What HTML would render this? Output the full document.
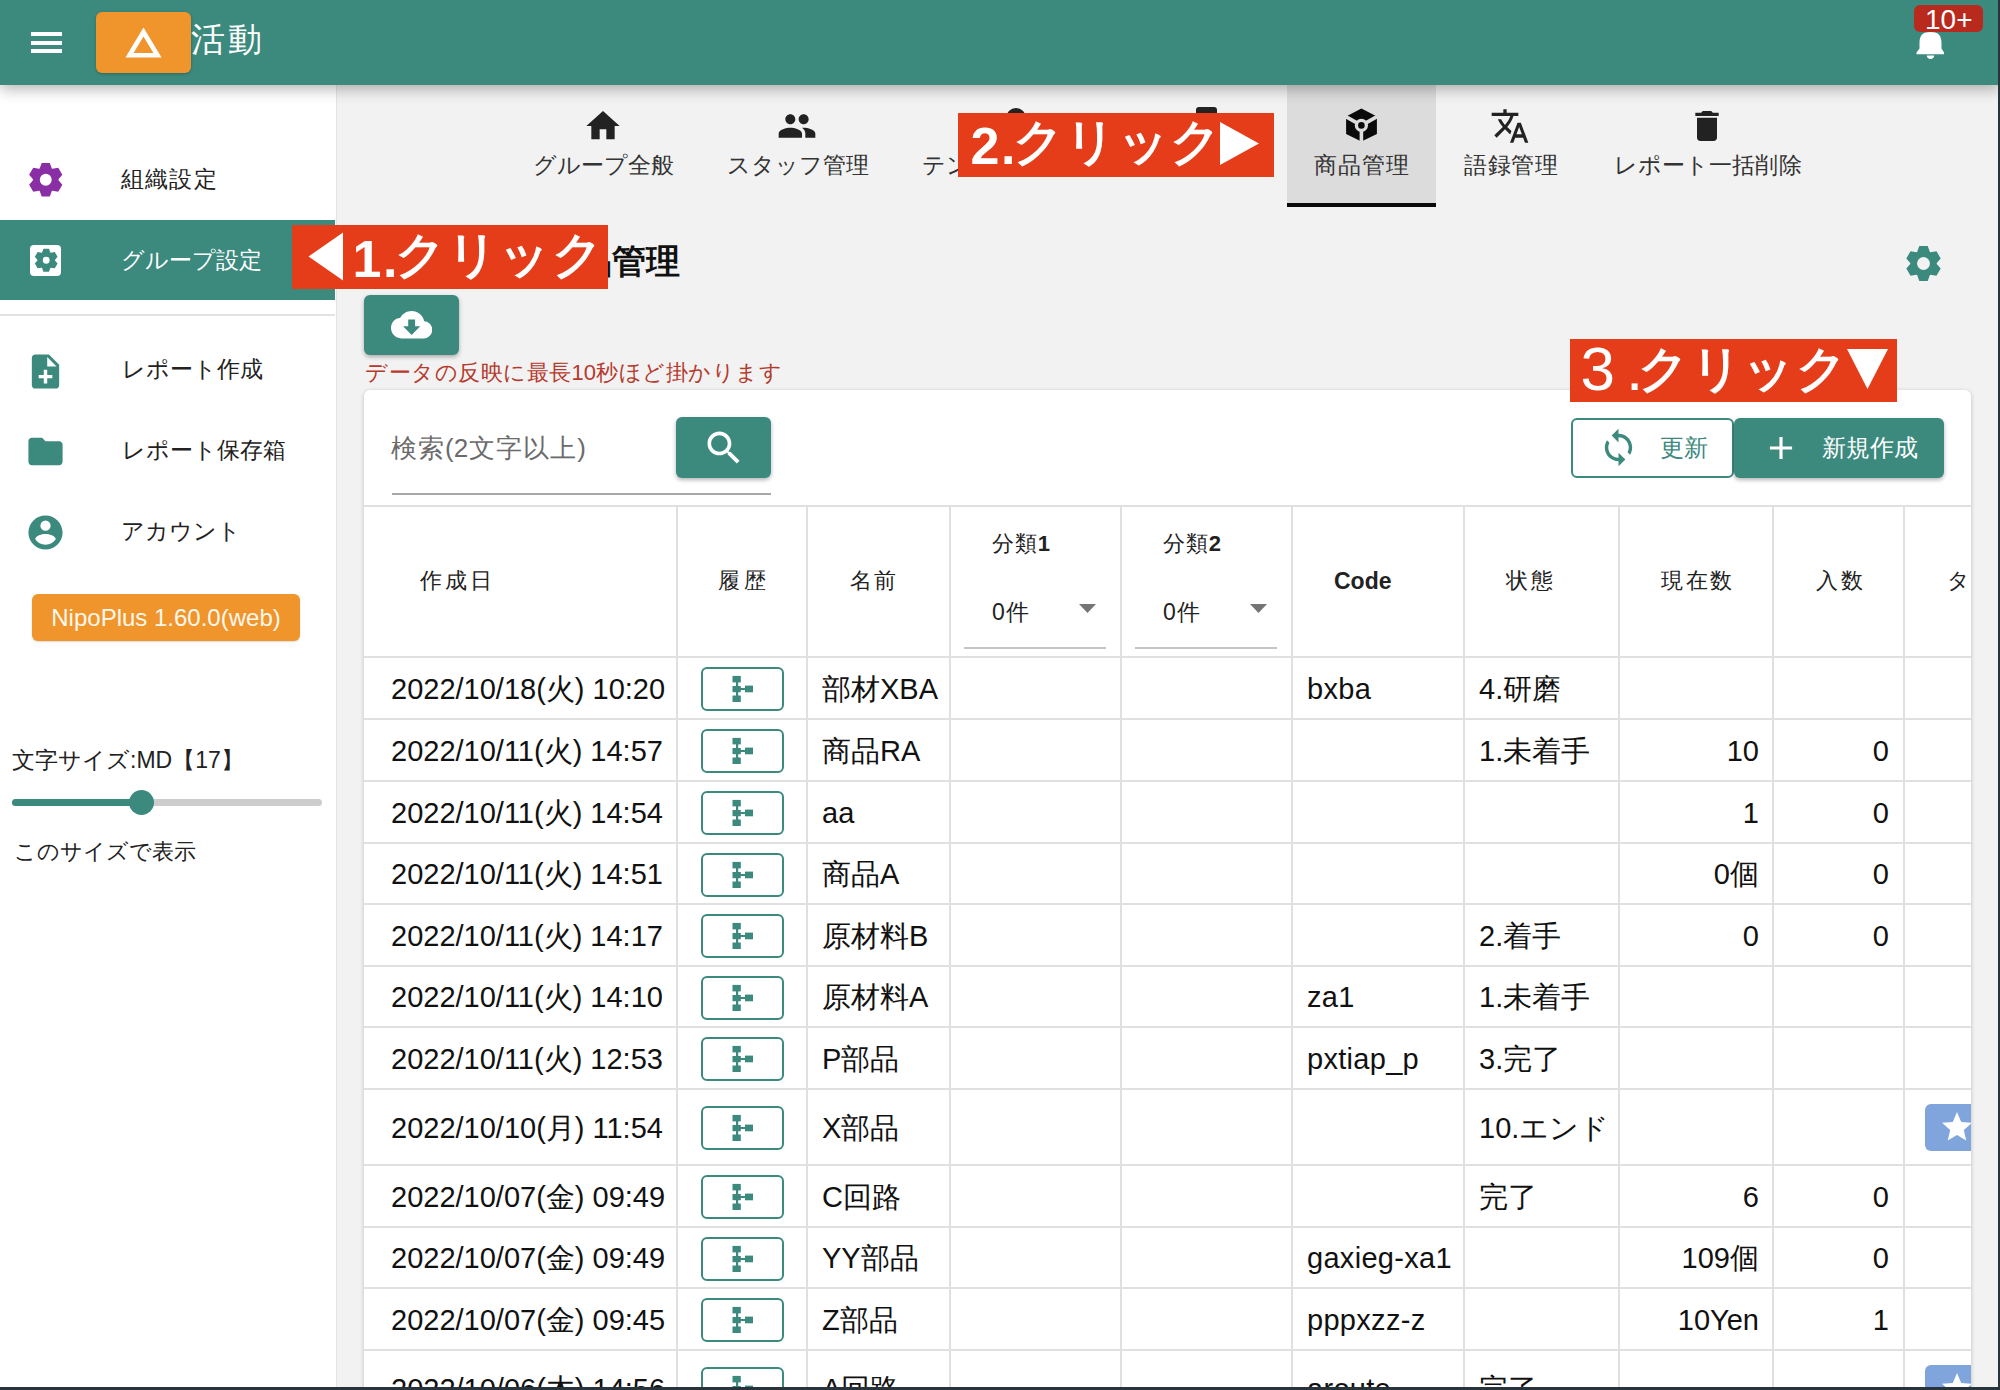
<!DOCTYPE html>
<html lang="ja"><head><meta charset="utf-8">
<style>
*{box-sizing:border-box;margin:0;padding:0}
html,body{width:2000px;height:1390px;overflow:hidden;background:#f2f2f2;font-family:"Liberation Sans",sans-serif;color:#222}
.a{position:absolute}
.t{position:absolute;white-space:nowrap;line-height:1}
svg{position:absolute;display:block}
#hdr{left:0;top:0;width:2000px;height:85px;background:#3c897e;z-index:5;box-shadow:0 4px 14px rgba(0,0,0,.30)}
#side{left:0;top:85px;width:337px;height:1305px;background:#fff;border-right:1px solid #e4e4e4;z-index:2}
.teal{background:#3c897e}
.ann{position:absolute;background:#e53d1a;z-index:20}
.hbtn{position:absolute;width:83px;height:44px;border:2px solid #3c897e;border-radius:6px;background:#fff}
</style></head><body>

<div id="hdr" class="a">
<div class="a" style="left:31px;top:32px;width:31px;height:4px;background:#fff"></div>
<div class="a" style="left:31px;top:40.5px;width:31px;height:4px;background:#fff"></div>
<div class="a" style="left:31px;top:49px;width:31px;height:4px;background:#fff"></div>
<div class="a" style="left:96px;top:12px;width:95px;height:61px;background:#f0952b;border-radius:6px;box-shadow:0 1px 3px rgba(0,0,0,.25)"></div>
<svg style="left:122px;top:24px" width="44" height="38" viewBox="0 0 44 38"><path d="M21.5 8 L35.5 31.2 L7.5 31.2 Z" fill="none" stroke="#fff" stroke-width="4.6" stroke-linejoin="miter"/></svg>
<div class="t" style="font-size:34px;color:#fff;font-weight:normal;top:21.5px;left:191.00px;width:71.00px;text-align:justify;text-align-last:justify;">活動</div>
<div class="a" style="left:1914px;top:5px;width:69px;height:27px;background:#b8291e;border-radius:6px"></div>
<div class="t" style="font-size:28px;color:#fff;font-weight:normal;top:6px;left:1925.00px;">10+</div>
<svg style="left:1914px;top:30px" width="32" height="32" viewBox="0 0 32 32"><path d="M5.5 13 C5.5 5 9 2 16.5 2 C24 2 27.5 5 27.5 13 L27.5 18.5 L30 22.5 L30 24.2 L2.5 24.2 L2.5 22.5 L5.5 18.5 Z M12.8 25.5 L20.2 25.5 C20.2 27.5 18.5 29 16.5 29 C14.5 29 12.8 27.5 12.8 25.5 Z" fill="#fff"/></svg>
</div>
<div class="a" style="left:1998px;top:0;width:2px;height:1390px;background:#28343a;z-index:30"></div>
<div class="a" style="left:0;top:1387px;width:2000px;height:3px;background:#28343a;z-index:30"></div>
<div id="side" class="a">
<svg style="left:25px;top:73.5px" width="41.5" height="41.5" viewBox="0 0 24 24"><path fill-rule="evenodd" d="M8.50,5.48 L9.65,2.28 L14.35,2.28 L15.50,5.48 L15.90,5.71 L19.24,5.10 L21.59,9.18 L19.40,11.77 L19.40,12.23 L21.59,14.82 L19.24,18.90 L15.90,18.29 L15.50,18.52 L14.35,21.72 L9.65,21.72 L8.50,18.52 L8.10,18.29 L4.76,18.90 L2.41,14.82 L4.60,12.23 L4.60,11.77 L2.41,9.18 L4.76,5.10 L8.10,5.71 Z M8.55,12 a3.45,3.45 0 1,0 6.90,0 a3.45,3.45 0 1,0 -6.90,0 Z" fill="#8a2ea6"/></svg>
<div class="t" style="font-size:23px;color:#222;font-weight:normal;top:83px;left:120.50px;width:96.00px;text-align:justify;text-align-last:justify;">組織設定</div>
<div class="a teal" style="left:0;top:135px;width:335px;height:80px"></div>
<div class="a" style="left:30px;top:160px;width:31px;height:31px;background:#fff;border-radius:4px"></div>
<svg style="left:31.6px;top:161.3px" width="28.4" height="28.4" viewBox="0 0 24 24"><path fill-rule="evenodd" d="M8.50,5.48 L9.65,2.28 L14.35,2.28 L15.50,5.48 L15.90,5.71 L19.24,5.10 L21.59,9.18 L19.40,11.77 L19.40,12.23 L21.59,14.82 L19.24,18.90 L15.90,18.29 L15.50,18.52 L14.35,21.72 L9.65,21.72 L8.50,18.52 L8.10,18.29 L4.76,18.90 L2.41,14.82 L4.60,12.23 L4.60,11.77 L2.41,9.18 L4.76,5.10 L8.10,5.71 Z M9.10,12 a2.90,2.90 0 1,0 5.80,0 a2.90,2.90 0 1,0 -5.80,0 Z" fill="#3c897e"/></svg>
<div class="t" style="font-size:23px;color:#fff;font-weight:normal;top:164px;left:121.00px;width:137.00px;text-align:justify;text-align-last:justify;">グループ設定</div>
<div class="a" style="left:0;top:229px;width:335px;height:2px;background:#e2e2e2"></div>
<svg style="left:25px;top:266px" width="41" height="41" viewBox="0 0 24 24"><path d="M14 2H6c-1.1 0-1.99.9-1.99 2L4 20c0 1.1.89 2 1.99 2H18c1.1 0 2-.9 2-2V8l-6-6zm2 14h-3v3h-2v-3H8v-2h3v-3h2v3h3v2zm-3-7V3.5L18.5 9H13z" fill="#3c897e"/></svg>
<div class="t" style="font-size:23px;color:#222;font-weight:normal;top:273px;left:122.00px;width:140.00px;text-align:justify;text-align-last:justify;">レポート作成</div>
<svg style="left:25px;top:346px" width="41" height="41" viewBox="0 0 24 24"><path d="M10 4H4c-1.1 0-1.99.9-1.99 2L2 18c0 1.1.9 2 2 2h16c1.1 0 2-.9 2-2V8c0-1.1-.9-2-2-2h-8l-2-2z" fill="#3c897e"/></svg>
<div class="t" style="font-size:23px;color:#222;font-weight:normal;top:354px;left:122.00px;width:163.00px;text-align:justify;text-align-last:justify;">レポート保存箱</div>
<svg style="left:25px;top:427px" width="41" height="41" viewBox="0 0 24 24"><path d="M12,19.2C9.5,19.2 7.290,17.92 6,16C6.03,14 10,12.9 12,12.9C14,12.9 17.97,14 18,16C16.71,17.92 14.5,19.2 12,19.2M12,5A3,3 0 0,1 15,8A3,3 0 0,1 12,11A3,3 0 0,1 9,8A3,3 0 0,1 12,5M12,2A10,10 0 0,0 2,12A10,10 0 0,0 12,22A10,10 0 0,0 22,12C22,6.47 17.5,2 12,2Z" fill="#3c897e"/></svg>
<div class="t" style="font-size:23px;color:#222;font-weight:normal;top:435px;left:121.00px;width:115.00px;text-align:justify;text-align-last:justify;">アカウント</div>
<div class="a" style="left:32px;top:509px;width:268px;height:47px;background:#f0952b;border-radius:6px;box-shadow:0 1px 2px rgba(0,0,0,.15)"></div>
<div class="t" style="left:32px;top:521px;width:268px;text-align:center;font-size:24px;color:#fff8ee">NipoPlus 1.60.0(web)</div>
<div class="t" style="font-size:23px;color:#222;font-weight:normal;top:664px;left:12.00px;width:221.00px;text-align:justify;text-align-last:justify;">文字サイズ:MD【17】</div>
<div class="a" style="left:12px;top:714px;width:310px;height:7px;background:#cdcdcd;border-radius:4px"></div>
<div class="a" style="left:12px;top:714px;width:130px;height:7px;background:#3c897e;border-radius:4px"></div>
<div class="a" style="left:128.5px;top:704.5px;width:25px;height:25px;background:#3c897e;border-radius:50%"></div>
<div class="t" style="font-size:22.4px;color:#222;font-weight:normal;top:755.5px;left:14.00px;width:181.00px;text-align:justify;text-align-last:justify;">このサイズで表示</div>
</div>
<div class="a" style="left:1287px;top:85px;width:149px;height:118px;background:#dcdcdc"></div>
<div class="a" style="left:1287px;top:203px;width:149px;height:4px;background:#0a0a0a"></div>
<svg style="left:583px;top:105.5px" width="40" height="40" viewBox="0 0 24 24"><path d="M10 20v-6h4v6h5v-8h3L12 3 2 12h3v8z" fill="#222"/></svg>
<svg style="left:777px;top:105.5px" width="40" height="40" viewBox="0 0 24 24"><path d="M16 11c1.66 0 2.99-1.34 2.99-3S17.66 5 16 5c-1.66 0-3 1.34-3 3s1.34 3 3 3zm-8 0c1.66 0 2.99-1.34 2.99-3S9.66 5 8 5C6.34 5 5 6.34 5 8s1.34 3 3 3zm0 2c-2.33 0-7 1.17-7 3.5V19h14v-2.5c0-2.330-4.67-3.5-7-3.5zm8 0c-.29 0-.62.02-.97.05 1.16.84 1.97 1.97 1.97 3.45V19h6v-2.5c0-2.33-4.67-3.5-7-3.5z" fill="#222"/></svg>
<svg style="left:1490px;top:105.5px" width="40" height="40" viewBox="0 0 24 24"><path d="M12.87 15.07l-2.54-2.51.03-.03c1.74-1.94 2.98-4.17 3.71-6.53H17V4h-7V2H8v2H1v1.99h11.17C11.5 7.92 10.44 9.75 9 11.35 8.07 10.32 7.3 9.19 6.69 8h-2c.73 1.63 1.730 3.17 2.98 4.56l-5.09 5.02L4 19l5-5 3.11 3.11.76-2.04zM18.5 10h-2L12 22h2l1.12-3h4.75L21 22h2l-4.5-12zm-2.62 7l1.62-4.33L19.12 17h-3.24z" fill="#222"/></svg>
<svg style="left:1687px;top:105.5px" width="40" height="40" viewBox="0 0 24 24"><path d="M6 19c0 1.1.9 2 2 2h8c1.1 0 2-.9 2-2V7H6v12zM19 4h-3.5l-1-1h-5l-1 1H5v2h14V4z" fill="#222"/></svg>
<div class="a" style="left:1005.7px;top:107.7px;width:20.6px;height:20.6px;border-radius:50%;background:#222"></div>
<div class="a" style="left:1196px;top:107px;width:21px;height:20px;border-radius:3px 3px 0 0;background:#222"></div>
<div class="t" style="font-size:23px;color:#333;font-weight:normal;top:153.5px;left:533.00px;width:137.00px;text-align:justify;text-align-last:justify;">グループ全般</div>
<div class="t" style="font-size:23px;color:#333;font-weight:normal;top:153.5px;left:727.00px;width:140.00px;text-align:justify;text-align-last:justify;">スタッフ管理</div>
<div class="t" style="font-size:23px;color:#333;font-weight:normal;top:153.5px;left:922.00px;width:186.00px;text-align:justify;text-align-last:justify;">テンプレート管理</div>
<div class="t" style="font-size:23px;color:#333;font-weight:normal;top:153.5px;left:1314.00px;width:95.00px;text-align:justify;text-align-last:justify;">商品管理</div>
<div class="t" style="font-size:23px;color:#333;font-weight:normal;top:153.5px;left:1464.00px;width:94.00px;text-align:justify;text-align-last:justify;">語録管理</div>
<div class="t" style="font-size:23px;color:#333;font-weight:normal;top:153.5px;left:1613.50px;width:188.00px;text-align:justify;text-align-last:justify;">レポート一括削除</div>
<svg style="left:1336px;top:100px" width="50" height="50" viewBox="0 0 50 50"><path d="M25.4 8.4 L40.9 16.4 L40.9 33.9 L25.4 41.6 L10.1 33.9 L10.1 16.4 Z" fill="#0a0a0a"/><path d="M25.4 25.4 L8 15.6 M25.4 25.4 L42.8 15.6 M25.4 25.4 L25.4 44" stroke="#dcdcdc" stroke-width="3.6" fill="none"/><circle cx="25.4" cy="25.4" r="6.6" fill="#dcdcdc"/><circle cx="25.4" cy="25.4" r="3.3" fill="#0a0a0a"/></svg>
<div class="t" style="font-size:34px;color:#111;font-weight:bold;top:244px;left:544.00px;width:136.00px;text-align:justify;text-align-last:justify;">商品管理</div>
<svg style="left:1902px;top:242px" width="43" height="43" viewBox="0 0 24 24"><path fill-rule="evenodd" d="M8.50,5.48 L9.65,2.28 L14.35,2.28 L15.50,5.48 L15.90,5.71 L19.24,5.10 L21.59,9.18 L19.40,11.77 L19.40,12.23 L21.59,14.82 L19.24,18.90 L15.90,18.29 L15.50,18.52 L14.35,21.72 L9.65,21.72 L8.50,18.52 L8.10,18.29 L4.76,18.90 L2.41,14.82 L4.60,12.23 L4.60,11.77 L2.41,9.18 L4.76,5.10 L8.10,5.71 Z M8.40,12 a3.60,3.60 0 1,0 7.20,0 a3.60,3.60 0 1,0 -7.20,0 Z" fill="#3c897e"/></svg>
<div class="a" style="left:364px;top:295px;width:95px;height:60px;background:#3c897e;border-radius:6px;box-shadow:0 2px 4px rgba(0,0,0,.3)"></div>
<svg style="left:391px;top:304.1px" width="41.3" height="41.3" viewBox="0 0 24 24"><path d="M19.35 10.04C18.67 6.59 15.64 4 12 4 9.11 4 6.6 5.64 5.35 8.04 2.34 8.36 0 10.91 0 14c0 3.31 2.69 6 6 6h13c2.76 0 5-2.24 5-5 0-2.64-2.05-4.78-4.65-4.96zM17 13l-5 5-5-5h3V9h4v4h3z" fill="#fff"/></svg>
<div class="t" style="font-size:22px;color:#b53a2e;font-weight:normal;top:362px;left:365.00px;width:417.00px;text-align:justify;text-align-last:justify;">データの反映に最長10秒ほど掛かります</div>
<div id="card" class="a" style="left:364px;top:390px;width:1607px;height:1100px;background:#fff;border-radius:6px;box-shadow:0 1px 4px rgba(0,0,0,.22);overflow:hidden">
<div class="t" style="font-size:26px;color:#6b6b6b;font-weight:normal;top:45px;left:27.00px;width:195.00px;text-align:justify;text-align-last:justify;">検索(2文字以上)</div>
<div class="a" style="left:28px;top:103px;width:379px;height:2px;background:#a8a8a8"></div>
<div class="a" style="left:312px;top:27px;width:95px;height:61px;background:#3c897e;border-radius:6px;box-shadow:0 2px 4px rgba(0,0,0,.3)"></div>
<svg style="left:337.5px;top:36px" width="44" height="44" viewBox="0 0 24 24"><path d="M15.5 14h-.79l-.28-.27C15.41 12.59 16 11.11 16 9.5 16 5.91 13.09 3 9.5 3S3 5.91 3 9.5 5.91 16 9.5 16c1.61 0 3.09-.59 4.23-1.57l.27.28v.79l5 4.99L20.49 19l-4.99-5zm-6 0C7.01 14 5 11.99 5 9.5S7.01 5 9.5 5 14 7.01 14 9.5 11.99 14 9.5 14z" fill="#fff"/></svg>
<div class="a" style="left:1207px;top:28px;width:163px;height:60px;border:2px solid #3c897e;border-radius:6px;background:#fff"></div>
<svg style="left:1234px;top:37px" width="41" height="41" viewBox="0 0 24 24"><path d="M12 4V1L8 5l4 4V6c3.31 0 6 2.69 6 6 0 1.01-.25 1.97-.7 2.8l1.46 1.46C19.54 15.03 20 13.57 20 12c0-4.42-3.58-8-8-8zm0 14c-3.31 0-6-2.690-6-6 0-1.01.25-1.97.7-2.8L5.24 7.74C4.46 8.97 4 10.43 4 12c0 4.42 3.58 8 8 8v3l4-4-4-4v3z" fill="#3c897e"/></svg>
<div class="t" style="font-size:24px;color:#3c897e;font-weight:normal;top:46px;left:1296.00px;width:47.00px;text-align:justify;text-align-last:justify;">更新</div>
<div class="a" style="left:1370px;top:28px;width:210px;height:60px;background:#3c897e;border-radius:6px;box-shadow:0 2px 4px rgba(0,0,0,.3)"></div>
<svg style="left:1398px;top:39px" width="38" height="38" viewBox="0 0 24 24"><path d="M19 13h-6v6h-2v-6H5v-2h6V5h2v6h6v2z" fill="#fff"/></svg>
<div class="t" style="font-size:24px;color:#fff;font-weight:normal;top:46px;left:1458.00px;width:95.00px;text-align:justify;text-align-last:justify;">新規作成</div>
<div class="a" style="left:312px;top:115px;width:2px;height:1000px;background:#e0e0e0"></div>
<div class="a" style="left:442px;top:115px;width:2px;height:1000px;background:#e0e0e0"></div>
<div class="a" style="left:585px;top:115px;width:2px;height:1000px;background:#e0e0e0"></div>
<div class="a" style="left:756px;top:115px;width:2px;height:1000px;background:#e0e0e0"></div>
<div class="a" style="left:927px;top:115px;width:2px;height:1000px;background:#e0e0e0"></div>
<div class="a" style="left:1099px;top:115px;width:2px;height:1000px;background:#e0e0e0"></div>
<div class="a" style="left:1254px;top:115px;width:2px;height:1000px;background:#e0e0e0"></div>
<div class="a" style="left:1408px;top:115px;width:2px;height:1000px;background:#e0e0e0"></div>
<div class="a" style="left:1539px;top:115px;width:2px;height:1000px;background:#e0e0e0"></div>
<div class="a" style="left:0;top:115px;width:1607px;height:2px;background:#e0e0e0"></div>
<div class="a" style="left:0;top:266px;width:1607px;height:2px;background:#e0e0e0"></div>
<div class="a" style="left:0;top:328px;width:1607px;height:2px;background:#e0e0e0"></div>
<div class="a" style="left:0;top:390px;width:1607px;height:2px;background:#e0e0e0"></div>
<div class="a" style="left:0;top:452px;width:1607px;height:2px;background:#e0e0e0"></div>
<div class="a" style="left:0;top:513px;width:1607px;height:2px;background:#e0e0e0"></div>
<div class="a" style="left:0;top:575px;width:1607px;height:2px;background:#e0e0e0"></div>
<div class="a" style="left:0;top:636px;width:1607px;height:2px;background:#e0e0e0"></div>
<div class="a" style="left:0;top:698px;width:1607px;height:2px;background:#e0e0e0"></div>
<div class="a" style="left:0;top:774px;width:1607px;height:2px;background:#e0e0e0"></div>
<div class="a" style="left:0;top:836px;width:1607px;height:2px;background:#e0e0e0"></div>
<div class="a" style="left:0;top:897px;width:1607px;height:2px;background:#e0e0e0"></div>
<div class="a" style="left:0;top:959px;width:1607px;height:2px;background:#e0e0e0"></div>
<div class="a" style="left:0;top:1035px;width:1607px;height:2px;background:#e0e0e0"></div>
<div class="t" style="font-size:22px;color:#222;font-weight:normal;top:180px;left:55.50px;width:72.00px;text-align:justify;text-align-last:justify;">作成日</div>
<div class="t" style="font-size:22px;color:#222;font-weight:normal;top:180px;left:354.00px;width:48.00px;text-align:justify;text-align-last:justify;">履歴</div>
<div class="t" style="font-size:22px;color:#222;font-weight:normal;top:180px;left:486.00px;width:46.00px;text-align:justify;text-align-last:justify;">名前</div>
<div class="t" style="font-size:22px;color:#222;font-weight:normal;top:143px;left:628.00px;width:58.00px;text-align:justify;text-align-last:justify;">分類<b>1</b></div>
<div class="t" style="font-size:23px;color:#222;font-weight:normal;top:211px;left:628.00px;width:37.00px;text-align:justify;text-align-last:justify;">0件</div>
<svg style="left:715px;top:214px" width="17" height="10" viewBox="0 0 17 10"><path d="M0 0 L17 0 L8.5 9 Z" fill="#757575"/></svg>
<div class="a" style="left:600px;top:257px;width:142px;height:2px;background:#c4c4c4"></div>
<div class="t" style="font-size:22px;color:#222;font-weight:normal;top:143px;left:799.00px;width:58.00px;text-align:justify;text-align-last:justify;">分類<b>2</b></div>
<div class="t" style="font-size:23px;color:#222;font-weight:normal;top:211px;left:799.00px;width:37.00px;text-align:justify;text-align-last:justify;">0件</div>
<svg style="left:886px;top:214px" width="17" height="10" viewBox="0 0 17 10"><path d="M0 0 L17 0 L8.5 9 Z" fill="#757575"/></svg>
<div class="a" style="left:771px;top:257px;width:142px;height:2px;background:#c4c4c4"></div>
<div class="t" style="font-size:23px;color:#222;font-weight:bold;top:180px;left:970.00px;">Code</div>
<div class="t" style="font-size:22px;color:#222;font-weight:normal;top:180px;left:1142.00px;width:47.00px;text-align:justify;text-align-last:justify;">状態</div>
<div class="t" style="font-size:22px;color:#222;font-weight:normal;top:180px;left:1297.00px;width:71.00px;text-align:justify;text-align-last:justify;">現在数</div>
<div class="t" style="font-size:22px;color:#222;font-weight:normal;top:180px;left:1452.00px;width:47.00px;text-align:justify;text-align-last:justify;">入数</div>
<div class="t" style="font-size:22px;color:#222;font-weight:normal;top:180px;left:1583.00px;width:69.00px;text-align:justify;text-align-last:justify;">タイプ</div>
<div class="t" style="font-size:29px;color:#111;font-weight:normal;top:284.7px;left:27.00px;width:274.09px;text-align:justify;text-align-last:justify;">2022/10/18(火) 10:20</div>
<div class="hbtn" style="left:337px;top:277.0px"><svg style="left:-2px;top:-2px" width="83" height="44" viewBox="0 0 83 44"><g fill="#3c897e"><rect x="31.5" y="8.9" width="8.3" height="6.5"/><rect x="31.5" y="19" width="8.3" height="6.2"/><rect x="31.5" y="28.5" width="8.3" height="6.5"/><rect x="44" y="18.6" width="8" height="6.7"/><rect x="35" y="14" width="2.2" height="16"/><rect x="39" y="21" width="6" height="2"/></g></svg></div>
<div class="t" style="font-size:29px;color:#111;font-weight:normal;top:284.7px;left:458.00px;width:116.03px;text-align:justify;text-align-last:justify;">部材XBA</div>
<div class="t" style="font-size:29px;color:#111;font-weight:normal;top:284.7px;letter-spacing:0.3px;left:943.00px;">bxba</div>
<div class="t" style="font-size:29px;color:#111;font-weight:normal;top:284.7px;left:1115.00px;width:82.19px;text-align:justify;text-align-last:justify;">4.研磨</div>
<div class="t" style="font-size:29px;color:#111;font-weight:normal;top:346.7px;left:27.00px;width:271.94px;text-align:justify;text-align-last:justify;">2022/10/11(火) 14:57</div>
<div class="hbtn" style="left:337px;top:339.0px"><svg style="left:-2px;top:-2px" width="83" height="44" viewBox="0 0 83 44"><g fill="#3c897e"><rect x="31.5" y="8.9" width="8.3" height="6.5"/><rect x="31.5" y="19" width="8.3" height="6.2"/><rect x="31.5" y="28.5" width="8.3" height="6.5"/><rect x="44" y="18.6" width="8" height="6.7"/><rect x="35" y="14" width="2.2" height="16"/><rect x="39" y="21" width="6" height="2"/></g></svg></div>
<div class="t" style="font-size:29px;color:#111;font-weight:normal;top:346.7px;left:458.00px;width:98.30px;text-align:justify;text-align-last:justify;">商品RA</div>
<div class="t" style="font-size:29px;color:#111;font-weight:normal;top:346.7px;left:1115.00px;width:111.19px;text-align:justify;text-align-last:justify;">1.未着手</div>
<div class="t" style="font-size:29px;color:#111;font-weight:normal;top:346.7px;left:1362.73px;">10</div>
<div class="t" style="font-size:29px;color:#111;font-weight:normal;top:346.7px;left:1508.86px;">0</div>
<div class="t" style="font-size:29px;color:#111;font-weight:normal;top:408.7px;left:27.00px;width:271.94px;text-align:justify;text-align-last:justify;">2022/10/11(火) 14:54</div>
<div class="hbtn" style="left:337px;top:401.0px"><svg style="left:-2px;top:-2px" width="83" height="44" viewBox="0 0 83 44"><g fill="#3c897e"><rect x="31.5" y="8.9" width="8.3" height="6.5"/><rect x="31.5" y="19" width="8.3" height="6.2"/><rect x="31.5" y="28.5" width="8.3" height="6.5"/><rect x="44" y="18.6" width="8" height="6.7"/><rect x="35" y="14" width="2.2" height="16"/><rect x="39" y="21" width="6" height="2"/></g></svg></div>
<div class="t" style="font-size:29px;color:#111;font-weight:normal;top:408.7px;left:458.00px;">aa</div>
<div class="t" style="font-size:29px;color:#111;font-weight:normal;top:408.7px;left:1378.86px;">1</div>
<div class="t" style="font-size:29px;color:#111;font-weight:normal;top:408.7px;left:1508.86px;">0</div>
<div class="t" style="font-size:29px;color:#111;font-weight:normal;top:470.2px;left:27.00px;width:271.94px;text-align:justify;text-align-last:justify;">2022/10/11(火) 14:51</div>
<div class="hbtn" style="left:337px;top:462.5px"><svg style="left:-2px;top:-2px" width="83" height="44" viewBox="0 0 83 44"><g fill="#3c897e"><rect x="31.5" y="8.9" width="8.3" height="6.5"/><rect x="31.5" y="19" width="8.3" height="6.2"/><rect x="31.5" y="28.5" width="8.3" height="6.5"/><rect x="44" y="18.6" width="8" height="6.7"/><rect x="35" y="14" width="2.2" height="16"/><rect x="39" y="21" width="6" height="2"/></g></svg></div>
<div class="t" style="font-size:29px;color:#111;font-weight:normal;top:470.2px;left:458.00px;width:77.34px;text-align:justify;text-align-last:justify;">商品A</div>
<div class="t" style="font-size:29px;color:#111;font-weight:normal;top:470.2px;left:1349.86px;width:45.14px;text-align:justify;text-align-last:justify;">0個</div>
<div class="t" style="font-size:29px;color:#111;font-weight:normal;top:470.2px;left:1508.86px;">0</div>
<div class="t" style="font-size:29px;color:#111;font-weight:normal;top:531.7px;left:27.00px;width:271.94px;text-align:justify;text-align-last:justify;">2022/10/11(火) 14:17</div>
<div class="hbtn" style="left:337px;top:524.0px"><svg style="left:-2px;top:-2px" width="83" height="44" viewBox="0 0 83 44"><g fill="#3c897e"><rect x="31.5" y="8.9" width="8.3" height="6.5"/><rect x="31.5" y="19" width="8.3" height="6.2"/><rect x="31.5" y="28.5" width="8.3" height="6.5"/><rect x="44" y="18.6" width="8" height="6.7"/><rect x="35" y="14" width="2.2" height="16"/><rect x="39" y="21" width="6" height="2"/></g></svg></div>
<div class="t" style="font-size:29px;color:#111;font-weight:normal;top:531.7px;left:458.00px;width:106.34px;text-align:justify;text-align-last:justify;">原材料B</div>
<div class="t" style="font-size:29px;color:#111;font-weight:normal;top:531.7px;left:1115.00px;width:82.19px;text-align:justify;text-align-last:justify;">2.着手</div>
<div class="t" style="font-size:29px;color:#111;font-weight:normal;top:531.7px;left:1378.86px;">0</div>
<div class="t" style="font-size:29px;color:#111;font-weight:normal;top:531.7px;left:1508.86px;">0</div>
<div class="t" style="font-size:29px;color:#111;font-weight:normal;top:593.2px;left:27.00px;width:271.94px;text-align:justify;text-align-last:justify;">2022/10/11(火) 14:10</div>
<div class="hbtn" style="left:337px;top:585.5px"><svg style="left:-2px;top:-2px" width="83" height="44" viewBox="0 0 83 44"><g fill="#3c897e"><rect x="31.5" y="8.9" width="8.3" height="6.5"/><rect x="31.5" y="19" width="8.3" height="6.2"/><rect x="31.5" y="28.5" width="8.3" height="6.5"/><rect x="44" y="18.6" width="8" height="6.7"/><rect x="35" y="14" width="2.2" height="16"/><rect x="39" y="21" width="6" height="2"/></g></svg></div>
<div class="t" style="font-size:29px;color:#111;font-weight:normal;top:593.2px;left:458.00px;width:106.34px;text-align:justify;text-align-last:justify;">原材料A</div>
<div class="t" style="font-size:29px;color:#111;font-weight:normal;top:593.2px;letter-spacing:0.3px;left:943.00px;">za1</div>
<div class="t" style="font-size:29px;color:#111;font-weight:normal;top:593.2px;left:1115.00px;width:111.19px;text-align:justify;text-align-last:justify;">1.未着手</div>
<div class="t" style="font-size:29px;color:#111;font-weight:normal;top:654.7px;left:27.00px;width:271.94px;text-align:justify;text-align-last:justify;">2022/10/11(火) 12:53</div>
<div class="hbtn" style="left:337px;top:647.0px"><svg style="left:-2px;top:-2px" width="83" height="44" viewBox="0 0 83 44"><g fill="#3c897e"><rect x="31.5" y="8.9" width="8.3" height="6.5"/><rect x="31.5" y="19" width="8.3" height="6.2"/><rect x="31.5" y="28.5" width="8.3" height="6.5"/><rect x="44" y="18.6" width="8" height="6.7"/><rect x="35" y="14" width="2.2" height="16"/><rect x="39" y="21" width="6" height="2"/></g></svg></div>
<div class="t" style="font-size:29px;color:#111;font-weight:normal;top:654.7px;left:458.00px;width:77.34px;text-align:justify;text-align-last:justify;">P部品</div>
<div class="t" style="font-size:29px;color:#111;font-weight:normal;top:654.7px;letter-spacing:0.3px;left:943.00px;">pxtiap_p</div>
<div class="t" style="font-size:29px;color:#111;font-weight:normal;top:654.7px;left:1115.00px;width:82.19px;text-align:justify;text-align-last:justify;">3.完了</div>
<div class="t" style="font-size:29px;color:#111;font-weight:normal;top:723.7px;left:27.00px;width:271.94px;text-align:justify;text-align-last:justify;">2022/10/10(月) 11:54</div>
<div class="hbtn" style="left:337px;top:716.0px"><svg style="left:-2px;top:-2px" width="83" height="44" viewBox="0 0 83 44"><g fill="#3c897e"><rect x="31.5" y="8.9" width="8.3" height="6.5"/><rect x="31.5" y="19" width="8.3" height="6.2"/><rect x="31.5" y="28.5" width="8.3" height="6.5"/><rect x="44" y="18.6" width="8" height="6.7"/><rect x="35" y="14" width="2.2" height="16"/><rect x="39" y="21" width="6" height="2"/></g></svg></div>
<div class="t" style="font-size:29px;color:#111;font-weight:normal;top:723.7px;left:458.00px;width:77.34px;text-align:justify;text-align-last:justify;">X部品</div>
<div class="t" style="font-size:29px;color:#111;font-weight:normal;top:723.7px;left:1115.00px;width:130.33px;text-align:justify;text-align-last:justify;">10.エンド</div>
<div class="a" style="left:1561px;top:713.5px;width:80px;height:47px;background:#7fa5dc;border-radius:6px"></div>
<svg style="left:1575px;top:719.0px" width="36" height="36" viewBox="0 0 24 24"><path d="M12 17.27L18.18 21l-1.64-7.03L22 9.24l-7.19-.61L12 2 9.19 8.63 2 9.24l5.46 4.73L5.82 21z" fill="#fff"/></svg>
<div class="t" style="font-size:29px;color:#111;font-weight:normal;top:792.7px;left:27.00px;width:274.09px;text-align:justify;text-align-last:justify;">2022/10/07(金) 09:49</div>
<div class="hbtn" style="left:337px;top:785.0px"><svg style="left:-2px;top:-2px" width="83" height="44" viewBox="0 0 83 44"><g fill="#3c897e"><rect x="31.5" y="8.9" width="8.3" height="6.5"/><rect x="31.5" y="19" width="8.3" height="6.2"/><rect x="31.5" y="28.5" width="8.3" height="6.5"/><rect x="44" y="18.6" width="8" height="6.7"/><rect x="35" y="14" width="2.2" height="16"/><rect x="39" y="21" width="6" height="2"/></g></svg></div>
<div class="t" style="font-size:29px;color:#111;font-weight:normal;top:792.7px;left:458.00px;width:78.95px;text-align:justify;text-align-last:justify;">C回路</div>
<div class="t" style="font-size:29px;color:#111;font-weight:normal;top:792.7px;left:1115.00px;width:58.00px;text-align:justify;text-align-last:justify;">完了</div>
<div class="t" style="font-size:29px;color:#111;font-weight:normal;top:792.7px;left:1378.86px;">6</div>
<div class="t" style="font-size:29px;color:#111;font-weight:normal;top:792.7px;left:1508.86px;">0</div>
<div class="t" style="font-size:29px;color:#111;font-weight:normal;top:854.2px;left:27.00px;width:274.09px;text-align:justify;text-align-last:justify;">2022/10/07(金) 09:49</div>
<div class="hbtn" style="left:337px;top:846.5px"><svg style="left:-2px;top:-2px" width="83" height="44" viewBox="0 0 83 44"><g fill="#3c897e"><rect x="31.5" y="8.9" width="8.3" height="6.5"/><rect x="31.5" y="19" width="8.3" height="6.2"/><rect x="31.5" y="28.5" width="8.3" height="6.5"/><rect x="44" y="18.6" width="8" height="6.7"/><rect x="35" y="14" width="2.2" height="16"/><rect x="39" y="21" width="6" height="2"/></g></svg></div>
<div class="t" style="font-size:29px;color:#111;font-weight:normal;top:854.2px;left:458.00px;width:96.69px;text-align:justify;text-align-last:justify;">YY部品</div>
<div class="t" style="font-size:29px;color:#111;font-weight:normal;top:854.2px;letter-spacing:0.3px;left:943.00px;">gaxieg-xa1</div>
<div class="t" style="font-size:29px;color:#111;font-weight:normal;top:854.2px;left:1317.61px;width:77.39px;text-align:justify;text-align-last:justify;">109個</div>
<div class="t" style="font-size:29px;color:#111;font-weight:normal;top:854.2px;left:1508.86px;">0</div>
<div class="t" style="font-size:29px;color:#111;font-weight:normal;top:915.7px;left:27.00px;width:274.09px;text-align:justify;text-align-last:justify;">2022/10/07(金) 09:45</div>
<div class="hbtn" style="left:337px;top:908.0px"><svg style="left:-2px;top:-2px" width="83" height="44" viewBox="0 0 83 44"><g fill="#3c897e"><rect x="31.5" y="8.9" width="8.3" height="6.5"/><rect x="31.5" y="19" width="8.3" height="6.2"/><rect x="31.5" y="28.5" width="8.3" height="6.5"/><rect x="44" y="18.6" width="8" height="6.7"/><rect x="35" y="14" width="2.2" height="16"/><rect x="39" y="21" width="6" height="2"/></g></svg></div>
<div class="t" style="font-size:29px;color:#111;font-weight:normal;top:915.7px;left:458.00px;width:75.72px;text-align:justify;text-align-last:justify;">Z部品</div>
<div class="t" style="font-size:29px;color:#111;font-weight:normal;top:915.7px;letter-spacing:0.3px;left:943.00px;">pppxzz-z</div>
<div class="t" style="font-size:29px;color:#111;font-weight:normal;top:915.7px;left:1313.80px;">10Yen</div>
<div class="t" style="font-size:29px;color:#111;font-weight:normal;top:915.7px;left:1508.86px;">1</div>
<div class="t" style="font-size:29px;color:#111;font-weight:normal;top:984.7px;left:27.00px;width:274.09px;text-align:justify;text-align-last:justify;">2022/10/06(木) 14:56</div>
<div class="hbtn" style="left:337px;top:977.0px"><svg style="left:-2px;top:-2px" width="83" height="44" viewBox="0 0 83 44"><g fill="#3c897e"><rect x="31.5" y="8.9" width="8.3" height="6.5"/><rect x="31.5" y="19" width="8.3" height="6.2"/><rect x="31.5" y="28.5" width="8.3" height="6.5"/><rect x="44" y="18.6" width="8" height="6.7"/><rect x="35" y="14" width="2.2" height="16"/><rect x="39" y="21" width="6" height="2"/></g></svg></div>
<div class="t" style="font-size:29px;color:#111;font-weight:normal;top:984.7px;left:458.00px;width:77.34px;text-align:justify;text-align-last:justify;">A回路</div>
<div class="t" style="font-size:29px;color:#111;font-weight:normal;top:984.7px;letter-spacing:0.3px;left:943.00px;">aroute</div>
<div class="t" style="font-size:29px;color:#111;font-weight:normal;top:984.7px;left:1115.00px;width:58.00px;text-align:justify;text-align-last:justify;">完了</div>
<div class="a" style="left:1561px;top:974.5px;width:80px;height:47px;background:#7fa5dc;border-radius:6px"></div>
<svg style="left:1575px;top:980.0px" width="36" height="36" viewBox="0 0 24 24"><path d="M12 17.27L18.18 21l-1.64-7.03L22 9.24l-7.19-.61L12 2 9.19 8.63 2 9.24l5.46 4.73L5.82 21z" fill="#fff"/></svg>
</div>
<div class="ann" style="left:292px;top:225px;width:316px;height:64px"></div>
<svg style="left:308px;top:232px;z-index:21" width="35" height="49" viewBox="0 0 35 49"><path d="M35 0.5 L35 48.5 L0.5 24.5 Z" fill="#fff"/></svg>
<div class="t" style="font-size:52px;color:#fff;font-weight:bold;top:232.5px;z-index:21;letter-spacing:1.5px;left:352.50px;">1.</div>
<div class="t" style="font-size:50px;color:#fff;font-weight:bold;top:230px;z-index:21;left:394.50px;width:208.00px;text-align:justify;text-align-last:justify;">クリック</div>
<div class="ann" style="left:958px;top:113px;width:316px;height:64px"></div>
<div class="t" style="font-size:52px;color:#fff;font-weight:bold;top:120px;z-index:21;letter-spacing:1.5px;left:970.50px;">2.</div>
<div class="t" style="font-size:50px;color:#fff;font-weight:bold;top:117px;z-index:21;left:1013.00px;width:208.00px;text-align:justify;text-align-last:justify;">クリック</div>
<svg style="left:1219px;top:122px;z-index:21" width="41" height="44" viewBox="0 0 41 44"><path d="M1 0 L40 21.5 L1 43 Z" fill="#fff"/></svg>
<div class="ann" style="left:1570px;top:339px;width:327px;height:63px"></div>
<div class="t" style="font-size:62px;color:#fff;font-weight:normal;top:337.5px;z-index:21;letter-spacing:11px;left:1580.50px;">3.</div>
<div class="t" style="font-size:50px;color:#fff;font-weight:bold;top:343.5px;z-index:21;left:1638.00px;width:209.00px;text-align:justify;text-align-last:justify;">クリック</div>
<svg style="left:1847px;top:349px;z-index:21" width="41" height="40" viewBox="0 0 41 40"><path d="M0 0 L41 0 L20.5 40 Z" fill="#fff"/></svg>
</body></html>
